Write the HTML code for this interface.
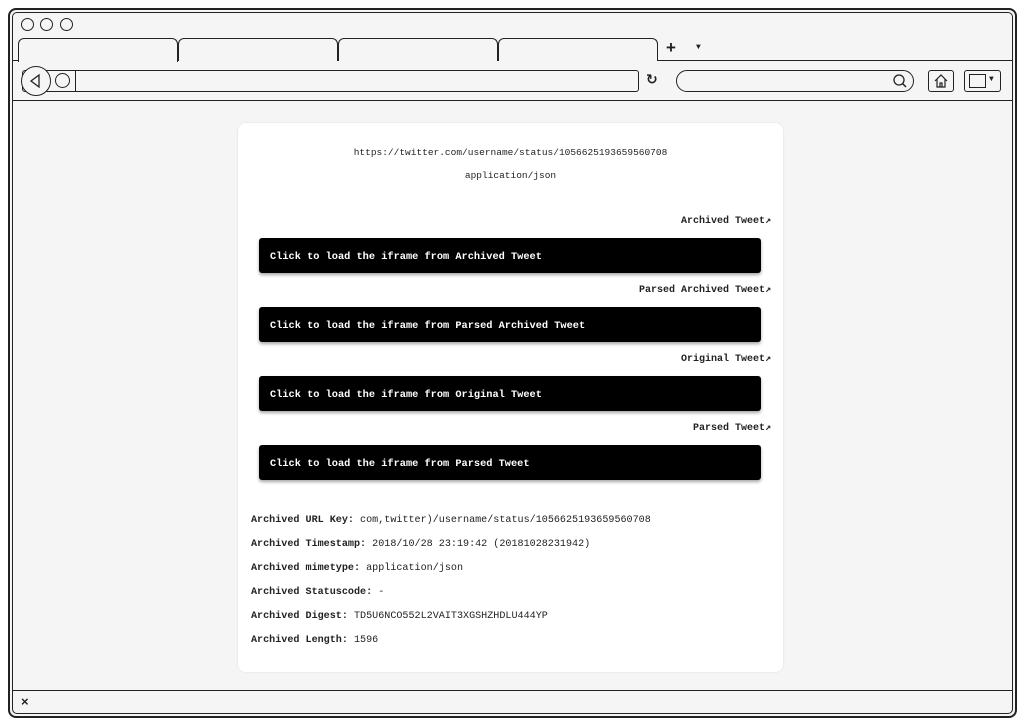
<!DOCTYPE html>
<html><head><style>
*{margin:0;padding:0;box-sizing:border-box}
body{width:1025px;height:726px;background:#fff;position:relative;overflow:hidden;font-family:"Liberation Mono",monospace;font-size:9.5px;color:#222}
.a{position:absolute}
.win{left:8px;top:8px;width:1009px;height:710px;border:2px solid #222;border-radius:8px;background:#f5f5f5}
.in{left:12px;top:12px;width:1001px;height:702px;border:1px solid #222;border-radius:5px}
.dot{width:13px;height:13px;border:1.3px solid #222;border-radius:50%;top:18px}
.tab{top:38px;height:23px;border:1.3px solid #222;border-bottom:none;border-radius:6px 6px 0 0;background:#f5f5f5;width:160px}
.btn{left:259px;width:502px;height:35px;background:#000;color:#fff;font-weight:bold;border-radius:3px;box-shadow:0 2px 3px rgba(0,0,0,.35);padding:13px 11px;font-size:10.3px}
.lab{right:254px;font-weight:bold;font-size:10px}
.d{left:251px;font-size:10.1px}
.d b{font-weight:bold}
</style></head><body>
<div class="a win"></div>
<div class="a in"></div>
<div class="a dot" style="left:21px"></div>
<div class="a dot" style="left:40px"></div>
<div class="a dot" style="left:60px"></div>
<div class="a" style="left:13px;top:60px;width:999px;border-top:1.3px solid #222"></div>
<div class="a tab" style="left:18px;height:24px;z-index:1"></div>
<div class="a tab" style="left:178px"></div>
<div class="a tab" style="left:338px"></div>
<div class="a tab" style="left:498px"></div>
<div class="a" style="left:666px;top:38px;font:bold 17px 'Liberation Sans',sans-serif">+</div>
<div class="a" style="left:696px;top:43px;font-size:8px">▼</div>
<div class="a" style="left:22px;top:70px;width:617px;height:22px;border:1.3px solid #222;border-radius:3px"></div>
<div class="a" style="left:21px;top:66px;width:30px;height:30px;border:1.3px solid #222;border-radius:50%;background:#f5f5f5"></div>
<svg class="a" style="left:28px;top:73px" width="16" height="16"><path d="M11 2 L3 8 L11 14 Z" fill="none" stroke="#222" stroke-width="1.3"/></svg>
<div class="a" style="left:55px;top:73px;width:15px;height:15px;border:1.3px solid #222;border-radius:50%"></div>
<div class="a" style="left:75px;top:70px;height:22px;border-left:1.3px solid #222"></div>
<div class="a" style="left:646px;top:72px;font:bold 14px 'DejaVu Sans',sans-serif">↻</div>
<div class="a" style="left:676px;top:70px;width:238px;height:22px;border:1.3px solid #222;border-radius:11px"></div>
<svg class="a" style="left:892px;top:73px" width="16" height="16"><circle cx="7" cy="7" r="5" fill="none" stroke="#222" stroke-width="1.3"/><path d="M10.5 10.5 L14 14" stroke="#222" stroke-width="1.5"/></svg>
<div class="a" style="left:928px;top:70px;width:26px;height:22px;border:1.3px solid #222;border-radius:3px"></div>
<svg class="a" style="left:933px;top:73px" width="16" height="16"><path d="M2 8 L8 2 L14 8 M4 6 V14 H12 V6 M7 14 V10 H9 V14" fill="none" stroke="#222" stroke-width="1.2"/></svg>
<div class="a" style="left:964px;top:70px;width:37px;height:22px;border:1.3px solid #222;border-radius:3px"></div>
<div class="a" style="left:969px;top:74px;width:17px;height:14px;border:1.3px solid #222"></div>
<div class="a" style="left:989px;top:75px;font-size:8px">▼</div>
<div class="a" style="left:13px;top:100px;width:999px;border-top:1.3px solid #222"></div>
<div class="a" style="left:13px;top:690px;width:999px;border-top:1.3px solid #222"></div>
<div class="a" style="left:21px;top:694px;font:bold 13px 'Liberation Sans',sans-serif">×</div>
<div class="a" style="left:238px;top:123px;width:545px;height:549px;background:#fff;border-radius:8px;box-shadow:0 0 2px rgba(0,0,0,.1)"></div>
<div class="a" style="left:238px;width:545px;top:147px;text-align:center">https://twitter.com/username/status/1056625193659560708</div>
<div class="a" style="left:238px;width:545px;top:170px;text-align:center">application/json</div>
<div class="a lab" style="top:215px">Archived Tweet↗</div>
<div class="a btn" style="top:238px">Click to load the iframe from Archived Tweet</div>
<div class="a lab" style="top:284px">Parsed Archived Tweet↗</div>
<div class="a btn" style="top:307px">Click to load the iframe from Parsed Archived Tweet</div>
<div class="a lab" style="top:353px">Original Tweet↗</div>
<div class="a btn" style="top:376px">Click to load the iframe from Original Tweet</div>
<div class="a lab" style="top:422px">Parsed Tweet↗</div>
<div class="a btn" style="top:445px">Click to load the iframe from Parsed Tweet</div>
<div class="a d" style="top:515px"><b>Archived URL Key:</b> com,twitter)/username/status/1056625193659560708</div>
<div class="a d" style="top:539px"><b>Archived Timestamp:</b> 2018/10/28 23:19:42 (20181028231942)</div>
<div class="a d" style="top:563px"><b>Archived mimetype:</b> application/json</div>
<div class="a d" style="top:587px"><b>Archived Statuscode:</b> -</div>
<div class="a d" style="top:611px"><b>Archived Digest:</b> TD5U6NCO552L2VAIT3XGSHZHDLU444YP</div>
<div class="a d" style="top:635px"><b>Archived Length:</b> 1596</div>
</body></html>
